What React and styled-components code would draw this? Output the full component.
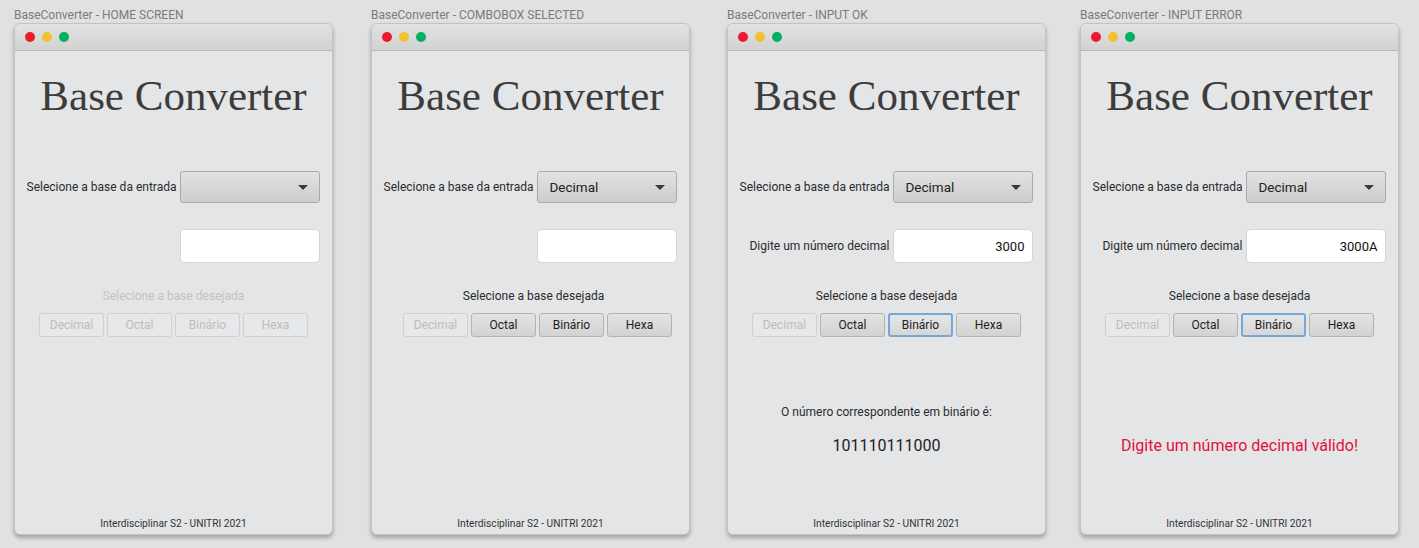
import styled, { createGlobalStyle, css } from 'styled-components';

const GlobalStyle = createGlobalStyle`
    html, body {
        margin: 0;
        padding: 0;
        background: #e1e1e1;
    }
    body {
        font-family: Roboto, "Liberation Sans", sans-serif;
    }
`;

const Page = styled.div`
    display: flex;
    align-items: flex-start;
    padding: 8px 0 0 14px;
    height: 548px;
    box-sizing: border-box;
`;

const Column = styled.div`
    display: flex;
    flex-direction: column;
    width: 319px;
    margin-left: ${props => props.offset || 0}px;
`;

const Caption = styled.div`
    font-size: 12px;
    line-height: 15px;
    color: #7b7b7b;
    height: 15px;
    white-space: nowrap;
`;

const Window = styled.section`
    display: flex;
    flex-direction: column;
    height: 512px;
    box-sizing: border-box;
    background: #e4e5e7;
    border: 1px solid #c3c3c3;
    border-radius: 6px;
    box-shadow: 0 3px 4px rgba(0, 0, 0, 0.28);
    overflow: hidden;
`;

const TitleBar = styled.div`
    display: flex;
    align-items: center;
    gap: 7px;
    height: 26px;
    padding-left: 10px;
    background: linear-gradient(#e2e2e2, #d2d2d2);
    border-bottom: 1px solid #b8b8b8;
    flex-shrink: 0;
`;

const Light = styled.span`
    width: 10px;
    height: 10px;
    border-radius: 50%;
    background: ${props => props.color};
`;

const Body = styled.div`
    flex: 1;
    display: flex;
    flex-direction: column;
    align-items: center;
`;

const Title = styled.h1`
    margin: 20px 0 0;
    font-family: "Liberation Serif", serif;
    font-weight: normal;
    font-size: 43px;
    line-height: 50px;
    color: #3c3c3c;
`;

const Form = styled.div`
    display: grid;
    grid-template-columns: auto 140px;
    column-gap: 4px;
    row-gap: 26px;
    align-items: center;
    margin-top: 50px;
`;

const FieldLabel = styled.label`
    justify-self: end;
    font-size: 12px;
    color: #2b2b2b;
`;

const Combo = styled.div`
    position: relative;
    display: flex;
    align-items: center;
    height: 32px;
    box-sizing: border-box;
    padding-left: 11px;
    border: 1px solid #aaaaaa;
    border-radius: 3px;
    background: linear-gradient(#e2e2e2, #cdcdcd);
    font-size: 13.5px;
    color: #222;
    &::after {
        content: '';
        position: absolute;
        right: 11px;
        top: 13px;
        border-left: 5px solid transparent;
        border-right: 5px solid transparent;
        border-top: 5px solid #3a3a3a;
    }
`;

const Input = styled.div`
    grid-column: 2;
    display: flex;
    align-items: center;
    justify-content: flex-end;
    height: 34px;
    box-sizing: border-box;
    padding-right: 8px;
    background: #fff;
    border: 1px solid #d6d6d6;
    border-radius: 5px;
    font-size: 13px;
    color: #111;
`;

const Hint = styled.div`
    margin-top: 25px;
    margin-left: ${props => props.nudge * 2 || 0}px;
    font-size: 12px;
    line-height: 16px;
    color: ${props => (props.disabled ? '#c2c2c2' : '#2b2b2b')};
`;

const ButtonRow = styled.div`
    display: flex;
    gap: 3px;
    margin-top: 9px;
    margin-left: ${props => props.nudge * 2 || 0}px;
`;

const BaseButton = styled.button`
    width: 65px;
    height: 24px;
    padding: 0;
    box-sizing: border-box;
    font-family: Roboto, "Liberation Sans", sans-serif;
    font-size: 12px;
    border-radius: 3px;
    border: 1px solid #b3b3b3;
    background: linear-gradient(#e3e3e3, #d2d2d2);
    color: #1e1e1e;
    ${props => props.disabled && css`
        border-color: #d0d0d0;
        background: #e7e8ea;
        color: #bdbdbd;
    `}
    ${props => props.selected && css`
        border: 2px solid #76a6da;
        background: linear-gradient(#e6e6e6, #d6d6d6);
    `}
`;

const ResultArea = styled.div`
    display: flex;
    flex-direction: column;
    align-items: center;
    margin-top: 67px;
`;

const ResultLabel = styled.div`
    height: 16px;
    font-size: 12px;
    line-height: 16px;
    color: #2b2b2b;
`;

const ResultValue = styled.div`
    margin-top: 16px;
    font-size: 16px;
    line-height: 20px;
    color: ${props => (props.error ? '#e3103c' : '#1e1e1e')};
`;

const Footer = styled.footer`
    margin-top: auto;
    padding-bottom: 3px;
    font-size: 10.2px;
    line-height: 14px;
    color: #333;
`;

const bases = ['Decimal', 'Octal', 'Binário', 'Hexa'];

const screens = [
    { caption: 'BaseConverter - HOME SCREEN', offset: 0, base: '', idle: true },
    { caption: 'BaseConverter - COMBOBOX SELECTED', offset: 38, base: 'Decimal', hintNudge: 3, rowNudge: 7 },
    {
        caption: 'BaseConverter - INPUT OK', offset: 37, base: 'Decimal', value: '3000', selected: 'Binário',
        result: { label: 'O número correspondente em binário é:', value: '101110111000' },
    },
    {
        caption: 'BaseConverter - INPUT ERROR', offset: 34, base: 'Decimal', value: '3000A', selected: 'Binário',
        result: { label: '', value: 'Digite um número decimal válido!', error: true },
    },
];

const ConverterWindow = ({ screen }) => {
    return (
        <Column offset={screen.offset}>
            <Caption>{screen.caption}</Caption>
            <Window>
                <TitleBar>
                    <Light color="#ec1a2d" />
                    <Light color="#f0c232" />
                    <Light color="#00b15f" />
                </TitleBar>
                <Body>
                    <Title>Base Converter</Title>
                    <Form>
                        <FieldLabel>Selecione a base da entrada</FieldLabel>
                        <Combo>{screen.base}</Combo>
                        {screen.value && <FieldLabel>Digite um número decimal</FieldLabel>}
                        <Input>{screen.value}</Input>
                    </Form>
                    <Hint disabled={screen.idle} nudge={screen.hintNudge}>Selecione a base desejada</Hint>
                    <ButtonRow nudge={screen.rowNudge}>
                        {bases.map(base => (
                            <BaseButton
                                key={base}
                                disabled={screen.idle || base === screen.base}
                                selected={base === screen.selected}
                            >
                                {base}
                            </BaseButton>
                        ))}
                    </ButtonRow>
                    {screen.result && (
                        <ResultArea>
                            <ResultLabel>{screen.result.label}</ResultLabel>
                            <ResultValue error={screen.result.error}>{screen.result.value}</ResultValue>
                        </ResultArea>
                    )}
                    <Footer>Interdisciplinar S2 - UNITRI 2021</Footer>
                </Body>
            </Window>
        </Column>
    );
};

export default function App() {
    return (
        <>
            <GlobalStyle />
            <Page>
                {screens.map(screen => <ConverterWindow key={screen.caption} screen={screen} />)}
            </Page>
        </>
    );
}
